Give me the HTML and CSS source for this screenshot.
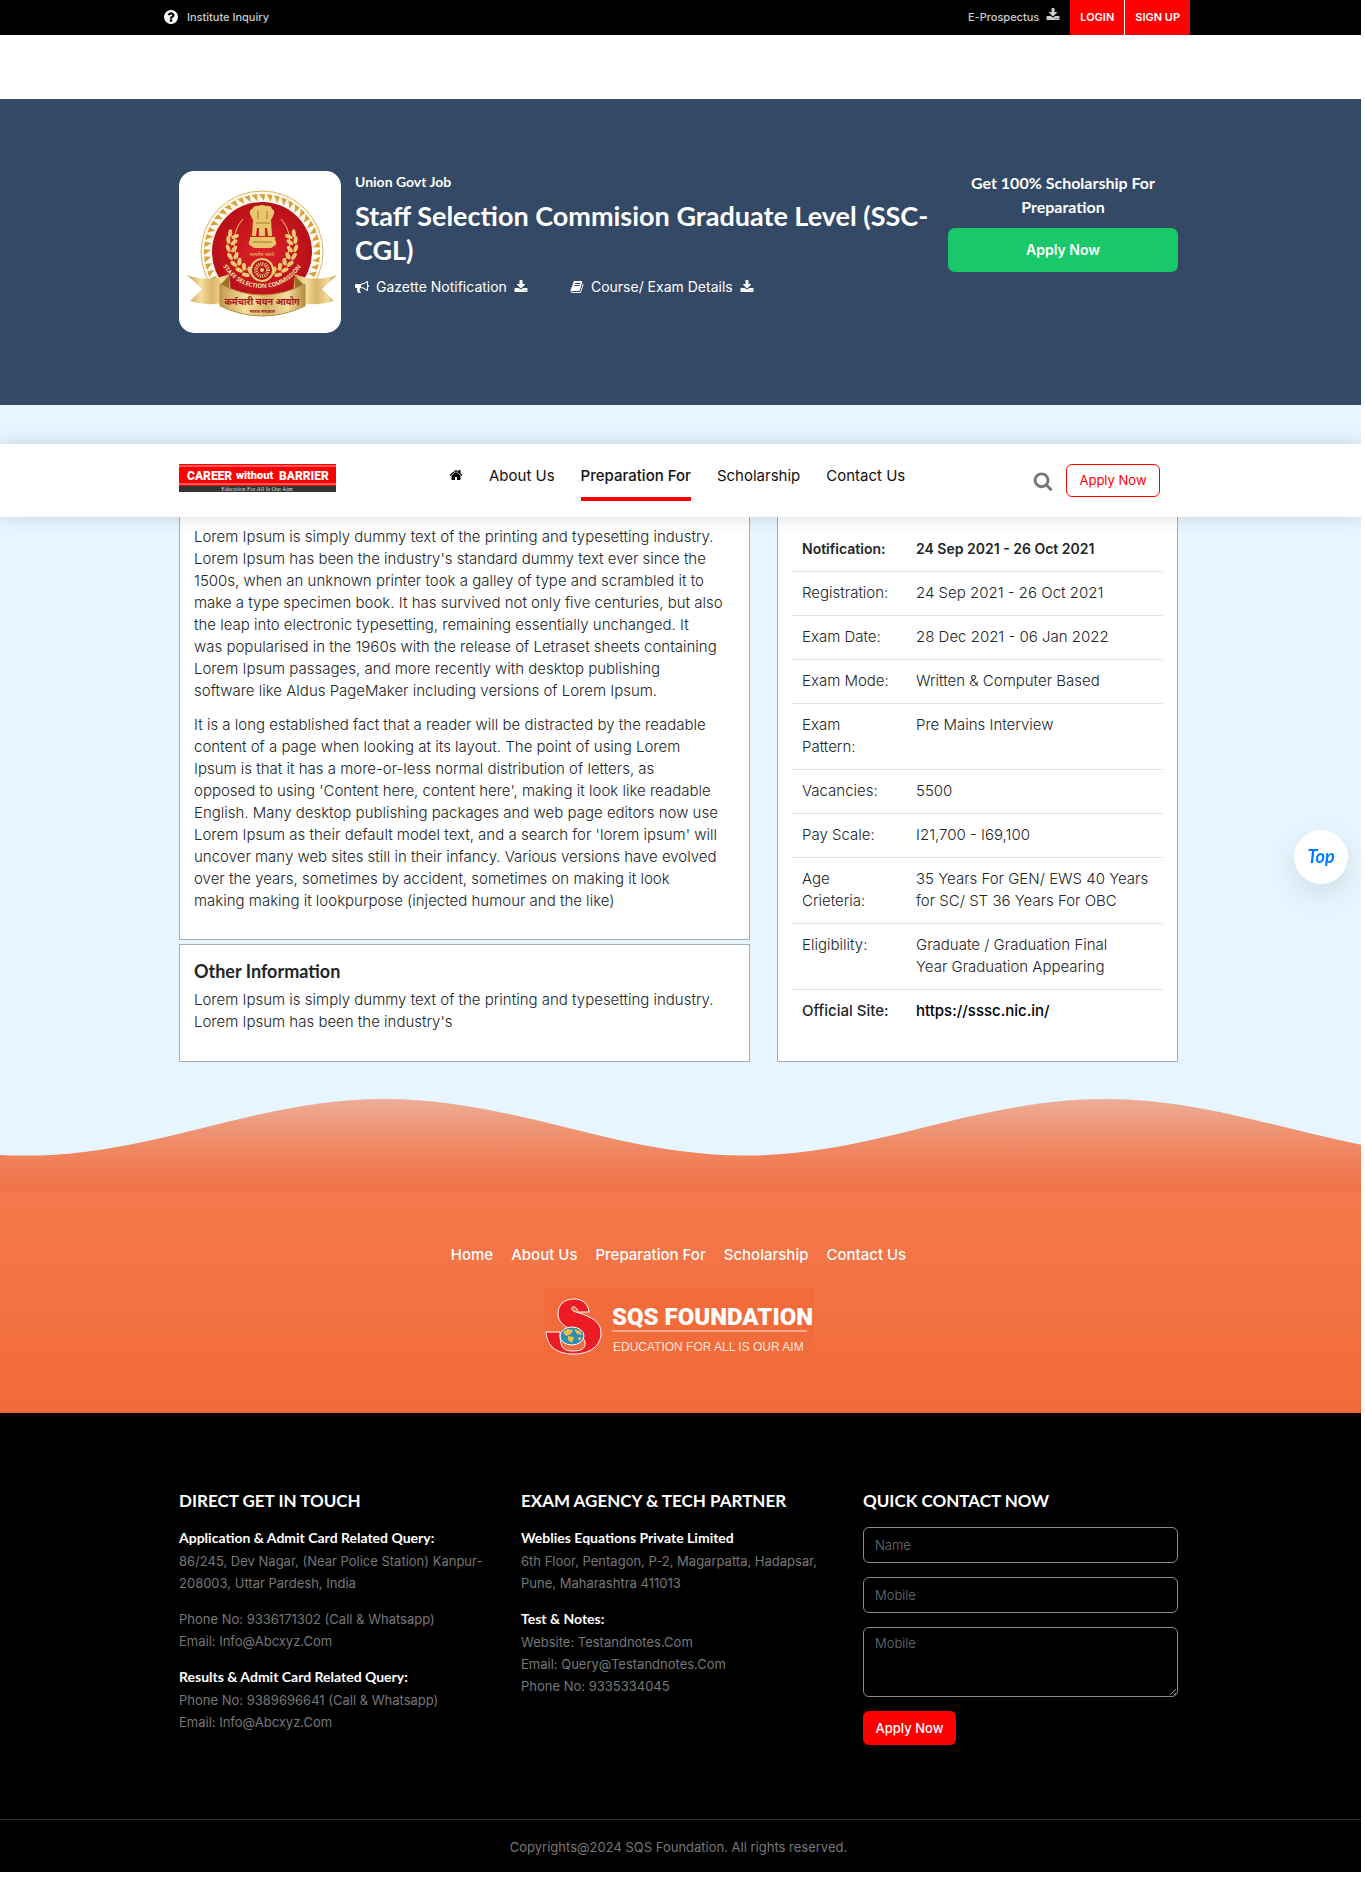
FILE: index.html
```html
<!DOCTYPE html>
<html lang="en">
<head>
<meta charset="utf-8">
<meta name="viewport" content="width=device-width, initial-scale=1">
<title>Staff Selection Commision Graduate Level (SSC-CGL)</title>
<link rel="stylesheet" href="styles.css">
</head>
<body>
<svg class="sprite" aria-hidden="true">
  <symbol id="i-download" viewBox="0 0 1792 1792"><path d="M1344 1344q0-26-19-45t-45-19-45 19-19 45 19 45 45 19 45-19 19-45zm256 0q0-26-19-45t-45-19-45 19-19 45 19 45 45 19 45-19 19-45zm128-224v320q0 40-28 68t-68 28h-1472q-40 0-68-28t-28-68v-320q0-40 28-68t68-28h465l135 136q58 56 136 56t136-56l136-136h464q40 0 68 28t28 68zm-325-569q17 41-14 70l-448 448q-18 19-45 19t-45-19l-448-448q-31-29-14-70 17-39 59-39h256v-448q0-26 19-45t45-19h256q26 0 45 19t19 45v448h256q42 0 59 39z"/></symbol>
  <symbol id="i-home" viewBox="0 0 1792 1792"><path d="M1472 992v480q0 26-19 45t-45 19h-384v-384h-256v384h-384q-26 0-45-19t-19-45v-480q0-1 .5-3t.5-3l575-474 575 474q1 2 1 6zm223-69l-62 74q-8 9-21 11h-3q-13 0-21-7l-692-577-692 577q-12 8-24 7-13-2-21-11l-62-74q-8-10-7-23.5t11-21.5l719-599q32-26 76-26t76 26l244 204v-195q0-14 9-23t23-9h192q14 0 23 9t9 23v408l219 182q10 8 11 21.5t-7 23.5z"/></symbol>
  <symbol id="i-search" viewBox="0 0 1792 1792"><path d="M1216 832q0-185-131.5-316.5t-316.5-131.5-316.5 131.5-131.5 316.5 131.5 316.5 316.5 131.5 316.5-131.5 131.5-316.5zm512 832q0 52-38 90t-90 38q-54 0-90-38l-343-342q-179 124-399 124-143 0-273.5-55.5t-225-150-150-225-55.5-273.5 55.5-273.5 150-225 225-150 273.5-55.5 273.5 55.5 225 150 150 225 55.5 273.5q0 220-124 399l343 343q37 37 37 90z"/></symbol>
  <symbol id="i-question" viewBox="128 128 1536 1536"><path d="M1024 1376v-192q0-14-9-23t-23-9h-192q-14 0-23 9t-9 23v192q0 14 9 23t23 9h192q14 0 23-9t9-23zm256-672q0-88-55.5-163t-138.5-116-170-41q-243 0-371 213-15 24 8 42l132 100q7 6 19 6 16 0 25-12 53-68 86-92 34-24 86-24 48 0 85.5 26t37.5 59q0 38-20 61t-68 45q-63 28-115.5 86.5t-52.5 125.5v36q0 14 9 23t23 9h192q14 0 23-9t9-23q0-19 21.5-49.5t54.5-49.5q32-18 49-28.5t46-35 44.5-48 28-60.5 12.5-81zm384 192q0 209-103 385.5t-279.5 279.5-385.5 103-385.5-103-279.5-279.5-103-385.5 103-385.5 279.5-279.5 385.5-103 385.5 103 279.5 279.5 103 385.5z"/></symbol>
  <symbol id="i-bullhorn" viewBox="0 0 1792 1792"><path d="M1664 640q53 0 90.5 37.5t37.5 90.5-37.5 90.5-90.5 37.5v384q0 52-38 90t-90 38q-417-347-812-380-58 19-91 66t-31 100.5 40 92.5q-20 33-23 65.5t6 58 33.5 55 48 50 61.5 50.5q-29 58-111.5 83t-168.5 11.5-132-55.5q-7-23-29.5-87.5t-32-94.5-23-89-15-101 3.5-98.5 22-110.5h-122q-66 0-113-47t-47-113v-192q0-66 47-113t113-47h480q435 0 896-384 52 0 90 38t38 90v384zm-128 604v-954q-394 302-768 343v270q377 42 768 341z"/></symbol>
  <symbol id="i-book" viewBox="0 0 1792 1792"><path d="M1703 478q40 57 18 129l-275 906q-19 64-76.5 107.5t-122.5 43.5h-923q-77 0-148.5-53.5t-99.5-131.5q-24-67-2-127 0-4 3-27t4-37q1-8-3-21.5t-3-19.5q2-11 8-21t16.5-23.5 16.5-23.5q23-38 45-91.5t30-91.5q3-10 .5-30t-.5-28q3-11 17-28t17-23q21-36 42-92t25-90q1-9-2.5-32t.5-28q4-13 22-30.5t22-22.5q19-26 42.5-84.5t27.5-96.5q1-8-3-25.5t-2-26.5q2-8 9-18t18-23 17-21q8-12 16.5-30.5t15-35 16-36 19.5-32 26.5-23.5 36-11.5 47.5 5.5l-1 3q38-9 51-9h761q74 0 114 56t18 130l-274 906q-36 119-71.5 153.5t-128.5 34.5h-869q-27 0-38 15-11 16-1 43 24 70 144 70h923q29 0 56-15.5t35-41.5l300-987q7-22 5-57 38 15 59 43zm-1064 2q-4 13 2 22.5t20 9.5h608q13 0 25.5-9.5t16.5-22.5l21-64q4-13-2-22.5t-20-9.5h-608q-13 0-25.5 9.5t-16.5 22.5zm-83 256q-4 13 2 22.5t20 9.5h608q13 0 25.5-9.5t16.5-22.5l21-64q4-13-2-22.5t-20-9.5h-608q-13 0-25.5 9.5t-16.5 22.5z"/></symbol>
</svg>

<div class="topbar band">
  <div class="topbar-inner">
    <a class="inquiry" href="#"><svg class="icon icon-white"><use href="#i-question"/></svg>Institute Inquiry</a>
    <div class="topbar-links">
      <a class="prospectus" href="#">E-Prospectus <svg class="icon"><use href="#i-download"/></svg></a>
      <a class="account" href="#">LOGIN</a>
      <a class="account" href="#">SIGN UP</a>
    </div>
  </div>
</div>

<section class="hero band">
  <div class="container hero-inner">
    <div class="emblem">
      <svg viewBox="0 0 162 162" role="img" aria-label="Staff Selection Commission emblem">
        <defs>
          <linearGradient id="ribbon" x1="0" x2="1"><stop offset="0" stop-color="#c39a4c"/><stop offset=".3" stop-color="#f5dfa0"/><stop offset=".55" stop-color="#d9b468"/><stop offset=".8" stop-color="#f3dc9c"/><stop offset="1" stop-color="#b98c3e"/></linearGradient>
          <radialGradient id="red"><stop offset="0" stop-color="#dd2226"/><stop offset="1" stop-color="#b80f18"/></radialGradient>
          <path id="t1" d="M80 23h6l-1 7z" fill="#d6a23a"/>
          <g id="t2"><use href="#t1"/><use href="#t1" transform="rotate(7.5 83 81)"/></g>
          <g id="t4"><use href="#t2"/><use href="#t2" transform="rotate(15 83 81)"/></g>
          <g id="t8"><use href="#t4"/><use href="#t4" transform="rotate(30 83 81)"/></g>
          <g id="t16"><use href="#t8"/><use href="#t8" transform="rotate(60 83 81)"/></g>
          <g id="l1" fill="#ecca74"><ellipse cx="50" cy="82" rx="2" ry="4" transform="rotate(-28 50 82)"/><ellipse cx="56" cy="82" rx="2" ry="4" transform="rotate(32 56 82)"/></g>
          <g id="laurel"><path d="M64 48A30 33 0 0 0 74 102" fill="none" stroke="#ecca74"/><use href="#l1" transform="rotate(-48 83 74)"/><use href="#l1" transform="rotate(-34 83 74)"/><use href="#l1" transform="rotate(-20 83 74)"/><use href="#l1" transform="rotate(-6 83 74)"/><use href="#l1" transform="rotate(8 83 74)"/><use href="#l1" transform="rotate(22 83 74)"/><use href="#l1" transform="rotate(34 83 74)"/></g>
          <path id="arc" d="M38 74a45 43 0 0 0 90 0"/>
        </defs>
        <circle cx="83" cy="81" r="61" fill="#fffaf0" stroke="#dcb45c"/>
        <use href="#t16" transform="rotate(-120 83 81)"/><use href="#t16"/>
        <circle cx="83" cy="81" r="50" fill="url(#red)"/>
        <use href="#laurel"/><use href="#laurel" transform="translate(166 0) scale(-1 1)"/>
        <g fill="#e9c66c">
          <path d="M73 38q2-4 6-3q4-2 8 0q5-1 6 3q3 1 2 5l-3 6 1 16h-4l-1-8h-2v8h-6v-8h-2l-1 8h-4l1-16-3-6q-1-4 2-5z"/>
          <path d="M71 66h25v3q3 4-1 6l-3 2H75l-3-2q-4-2-1-6z"/>
        </g>
        <path d="M79 40v8m9-8v8m-11 4h14M74 71h19" stroke="#a77a25" fill="none"/>
        <text class="motto" x="83" y="85" text-anchor="middle">सत्यमेव जयते</text>
        <circle cx="83" cy="99" r="11" fill="#b80f18" stroke="#ecca74" stroke-width="2"/>
        <circle cx="83" cy="99" r="6" fill="none" stroke="#ecca74" stroke-width="4" stroke-dasharray="1 1"/>
        <circle cx="83" cy="99" r="2" fill="#ecca74"/>
        <path d="M8 104q22 8 42-1l3 26q-22 8-42 1l12-12z" fill="url(#ribbon)"/>
        <path d="M158 104q-22 8-42-1l-3 26q22 8 42 1l-12-12z" fill="url(#ribbon)"/>
        <path d="M41 114l9-9v19z M125 114l-9-9v19z" fill="#9a6f2b"/>
        <path d="M41 113q42 22 85 0v22q-42 20-85 0z" fill="url(#ribbon)" stroke="#b98c3e"/>
        <text class="ring"><textPath href="#arc" startOffset="50%" text-anchor="middle">STAFF SELECTION COMMISSION</textPath></text>
        <text class="hindi" x="83" y="134" text-anchor="middle">कर्मचारी चयन आयोग</text>
        <text class="hindi-small" x="83" y="142" text-anchor="middle">भारत सरकार</text>
      </svg>
    </div>
    <div class="hero-copy">
      <p class="kicker">Union Govt Job</p>
      <h1>Staff Selection Commision Graduate Level (SSC-CGL)</h1>
      <div class="hero-links">
        <a href="#"><svg class="icon"><use href="#i-bullhorn"/></svg>Gazette Notification<svg class="icon"><use href="#i-download"/></svg></a>
        <a href="#"><svg class="icon"><use href="#i-book"/></svg>Course/ Exam Details<svg class="icon"><use href="#i-download"/></svg></a>
      </div>
    </div>
    <div class="hero-cta">
      <p>Get 100% Scholarship For Preparation</p>
      <button class="btn-green" type="button">Apply Now</button>
    </div>
  </div>
</section>

<main class="content">
  <header class="navbar band">
    <div class="container nav-inner">
      <a class="brand" href="#">
        <svg viewBox="0 0 157 28" role="img" aria-label="Career without Barrier">
          <rect width="157" height="28" fill="#fe0000"/>
          <path d="M0 2h157M0 20h157" stroke="#ffb0b0"/>
          <rect y="22" width="157" height="6" fill="#333"/>
          <g class="brand-text"><text x="8" y="16">CAREER</text><text class="brand-mid" x="57" y="15">without</text><text x="100" y="16">BARRIER</text></g>
          <text class="brand-sub" x="78" y="27" text-anchor="middle">Education For All Is Our Aim</text>
        </svg>
      </a>
      <nav class="main-nav" aria-label="Main">
        <a href="#" aria-label="Home"><svg class="icon"><use href="#i-home"/></svg></a>
        <a href="#">About Us</a>
        <a class="active" href="#">Preparation For</a>
        <a href="#">Scholarship</a>
        <a href="#">Contact Us</a>
      </nav>
      <div class="nav-actions">
        <button class="search" type="button" aria-label="Search"><svg><use href="#i-search"/></svg></button>
        <button class="btn-outline" type="button">Apply Now</button>
      </div>
    </div>
  </header>

  <div class="band">
    <div class="container columns">
      <div class="articles">
        <article class="card card-first">
          <p>Lorem Ipsum is simply dummy text of the printing and typesetting industry.<br>
            Lorem Ipsum has been the industry's standard dummy text ever since the<br>
            1500s, when an unknown printer took a galley of type and scrambled it to<br>
            make a type specimen book. It has survived not only five centuries, but also<br>
            the leap into electronic typesetting, remaining essentially unchanged. It<br>
            was popularised in the 1960s with the release of Letraset sheets containing<br>
            Lorem Ipsum passages, and more recently with desktop publishing<br>
            software like Aldus PageMaker including versions of Lorem Ipsum.</p>
          <p>It is a long established fact that a reader will be distracted by the readable<br>
            content of a page when looking at its layout. The point of using Lorem<br>
            Ipsum is that it has a more-or-less normal distribution of letters, as<br>
            opposed to using 'Content here, content here', making it look like readable<br>
            English. Many desktop publishing packages and web page editors now use<br>
            Lorem Ipsum as their default model text, and a search for 'lorem ipsum' will<br>
            uncover many web sites still in their infancy. Various versions have evolved<br>
            over the years, sometimes by accident, sometimes on making it look<br>
            making making it lookpurpose (injected humour and the like)</p>
        </article>
        <article class="card">
          <h2>Other Information</h2>
          <p>Lorem Ipsum is simply dummy text of the printing and typesetting industry.<br>
            Lorem Ipsum has been the industry's</p>
        </article>
      </div>
      <aside class="card facts">
        <table>
          <tbody>
            <tr class="strong"><th scope="row">Notification:</th><td>24 Sep 2021 - 26 Oct 2021</td></tr>
            <tr><th scope="row">Registration:</th><td>24 Sep 2021 - 26 Oct 2021</td></tr>
            <tr><th scope="row">Exam Date:</th><td>28 Dec 2021 - 06 Jan 2022</td></tr>
            <tr><th scope="row">Exam Mode:</th><td>Written &amp; Computer Based</td></tr>
            <tr><th scope="row">Exam<br>Pattern:</th><td>Pre Mains Interview</td></tr>
            <tr><th scope="row">Vacancies:</th><td>5500</td></tr>
            <tr><th scope="row">Pay Scale:</th><td>I21,700 - I69,100</td></tr>
            <tr><th scope="row">Age<br>Crieteria:</th><td>35 Years For GEN/ EWS 40 Years for SC/ ST 36 Years For OBC</td></tr>
            <tr><th scope="row">Eligibility:</th><td>Graduate / Graduation Final<br>Year Graduation Appearing</td></tr>
            <tr class="medium"><th scope="row">Official Site:</th><td><a href="#">https://sssc.nic.in/</a></td></tr>
          </tbody>
        </table>
      </aside>
    </div>
  </div>

  <svg class="wave" viewBox="0 0 1365 92" preserveAspectRatio="none" aria-hidden="true">
    <defs><linearGradient id="wave-fill" x1="0" x2="0" y1="0" y2="1"><stop offset="0" stop-color="#edae98"/><stop offset=".3" stop-color="#ee9676"/><stop offset=".65" stop-color="#f1805a"/><stop offset="1" stop-color="#f07347"/></linearGradient></defs>
    <path fill="url(#wave-fill)" d="M-335 0C-205 0-105 56 25 56S255 0 385 0S615 56 745 56S975 0 1105 0S1335 56 1465 56V93H-335z"/>
  </svg>
</main>

<section class="orange band">
  <nav class="foot-nav" aria-label="Footer">
    <a href="#">Home</a><a href="#">About Us</a><a href="#">Preparation For</a><a href="#">Scholarship</a><a href="#">Contact Us</a>
  </nav>
  <svg class="foot-logo" viewBox="0 0 270 71" role="img" aria-label="SQS Foundation">
    <rect width="270" height="71" fill="#f26b3a"/>
    <path d="M45 24C44 15 38 11 30 11C20 11 14 17 14 26C14 35 21 38 29 43C38 48 42 52 41 57C40 62 35 63 28 63C17 63 16 56 16 44H2C3 58 12 66 30 66C47 66 57 57 57 45C57 35 50 31 41 27C34 24 27 24 28 20C29 17 33 19 34 24z" fill="#ed1c24" stroke="#fff"/>
    <ellipse cx="28" cy="48" rx="12" ry="9" fill="#2a8fb5" stroke="#fff"/>
    <path d="M19 44l5-3 5 1-2 4-5 2zM30 41l6 2 2 4-5-1zM24 48l6 1-2 6-4-3zM34 49l4 1-3 3z" fill="#efc04a"/>
    <text class="foot-name" x="68" y="37">SQS FOUNDATION</text>
    <path d="M68 43h195" stroke="#ffe5da"/>
    <text class="foot-tag" x="69" y="63">EDUCATION FOR ALL IS OUR AIM</text>
  </svg>
</section>

<footer class="footer">
  <div class="band">
    <div class="container foot-cols">
      <section>
        <h3>DIRECT GET IN TOUCH</h3>
        <h4>Application &amp; Admit Card Related Query:</h4>
        <p>86/245, Dev Nagar, (Near Police Station) Kanpur-208003, Uttar Pardesh, India</p>
        <p>Phone No: 9336171302 (Call &amp; Whatsapp)<br>Email: Info@Abcxyz.Com</p>
        <h4>Results &amp; Admit Card Related Query:</h4>
        <p>Phone No: 9389696641 (Call &amp; Whatsapp)<br>Email: Info@Abcxyz.Com</p>
      </section>
      <section>
        <h3>EXAM AGENCY &amp; TECH PARTNER</h3>
        <h4>Weblies Equations Private Limited</h4>
        <p>6th Floor, Pentagon, P-2, Magarpatta, Hadapsar, Pune, Maharashtra 411013</p>
        <h4>Test &amp; Notes:</h4>
        <p>Website: Testandnotes.Com<br>Email: Query@Testandnotes.Com<br>Phone No: 9335334045</p>
      </section>
      <section>
        <h3>QUICK CONTACT NOW</h3>
        <form class="contact">
          <input type="text" placeholder="Name" aria-label="Name">
          <input type="tel" placeholder="Mobile" aria-label="Mobile">
          <textarea placeholder="Mobile" aria-label="Message"></textarea>
          <button class="btn-red" type="button">Apply Now</button>
        </form>
      </section>
    </div>
  </div>
  <p class="copyright band">Copyrights@2024 SQS Foundation. All rights reserved.</p>
</footer>

<a class="to-top" href="#">Top</a>
</body>
</html>
```
FILE: styles.css
```css
* { box-sizing: border-box; }

:root {
  --body: Inter, "Open Sans", sans-serif;
  --head: Lato, "Open Sans", sans-serif;
}

body {
  margin: 0 4px 0 0;
  background: #fff;
  color: #212529;
  font: 300 15px/22px var(--body);
}

h1, h2, h3, h4, p { margin: 0; }
a { color: inherit; text-decoration: none; }
button { font-family: inherit; cursor: pointer; }

.sprite { display: none; }
.icon { width: 14px; height: 14px; fill: currentColor; flex: none; }
.icon-white { fill: #fff; }

/* Bands span the page; containers centre the content in them */
.band { padding-right: 4px; }
.container { max-width: 999px; margin: 0 auto; }

/* Top bar */
.topbar { background: #000; margin-bottom: 64px; color: #ccc; }
.topbar-inner {
  display: flex;
  justify-content: space-between;
  max-width: 1029px;
  height: 35px;
  margin: 0 auto;
  padding-right: 3px;
  font-size: 11px;
  font-weight: 500;
}
.topbar-inner a { display: flex; align-items: center; }
.inquiry { gap: 9px; padding-bottom: 2px; }
.topbar-links { display: flex; }
.prospectus { gap: 7px; padding: 0 10px 2px 0; }
.prospectus .icon { margin-bottom: 4px; }
.topbar-links .account {
  padding: 0 10px 2px;
  background: #f00;
  color: #fff;
  font-weight: 600;
}
.account + .account { border-left: 1px solid #fff; }

/* Hero */
.hero { background: #344966; color: #fff; padding-top: 72px; padding-bottom: 72px; }
.hero-inner { display: flex; }
.emblem {
  width: 162px;
  height: 162px;
  margin-right: 14px;
  flex: none;
  background: #fff;
  border-radius: 15px;
  overflow: hidden;
}
.emblem svg { display: block; }
.ring { font: 700 6px "Open Sans", sans-serif; fill: #f6e3b0; }
.motto { font: 5px "Noto Sans", sans-serif; fill: #ecca74; }
.hindi { font: 700 9px "Noto Sans", sans-serif; fill: #a3161b; }
.hindi-small { font: 700 5px "Noto Sans", sans-serif; fill: #a3161b; }
.hero-copy { flex: 1; }
.kicker { font: 700 14px/22px var(--head); }
.hero h1 { margin: 6px 0 9px; font: 700 27px/34px var(--head); }
.hero-links { display: flex; gap: 42px; font-size: 14px; font-weight: 400; }
.hero-links a { display: flex; align-items: center; gap: 7px; }
.hero-cta { width: 230px; flex: none; text-align: center; }
.hero-cta p { margin-bottom: 9px; padding: 0 12px; font: 700 16px/24px var(--head); }
.btn-green {
  width: 100%;
  height: 44px;
  padding: 0 0 2px;
  border: 0;
  border-radius: 7px;
  background: #19c969;
  color: #fff;
  font-size: 14px;
  font-weight: 600;
}

/* Navigation */
.content { background: #e6f5fe; padding-top: 39px; }
.navbar {
  position: relative;
  z-index: 2;
  background: #fff;
  box-shadow: 0 0 16px rgba(0, 0, 0, .15);
}
.nav-inner { display: flex; align-items: flex-start; height: 73px; padding-top: 20px; }
.brand { width: 157px; margin-right: 113px; }
.brand svg { display: block; width: 157px; height: 28px; }
.brand-text { font: 900 12px Roboto, sans-serif; fill: #fff; }
.brand-mid { font-size: 11px; }
.brand-sub { font: 6px "Liberation Serif", serif; fill: #ddd; }
.main-nav { display: flex; gap: 26px; font-weight: 400; color: #111; }
.main-nav a { height: 37px; padding-top: 1px; }
.main-nav .icon { display: block; margin-top: 3px; fill: #000; }
.main-nav .active { border-bottom: 4px solid #f00; font-weight: 500; }
.nav-actions { display: flex; align-items: center; gap: 13px; margin-left: auto; margin-right: 18px; }
.search { padding: 0; border: 0; background: none; color: #777; }
.search svg { display: block; width: 20px; height: 20px; fill: currentColor; }
.btn-outline {
  width: 94px;
  height: 33px;
  padding: 0 0 2px;
  border: 1px solid #f00;
  border-radius: 6px;
  background: #fff;
  color: #f00;
  font-size: 13px;
}

/* Cards */
.columns { display: grid; grid-template-columns: 571fr 401fr; gap: 27px; }
.card { background: #fff; border: 1px solid #a9aeb2; padding: 14px; }
.articles .card { padding-right: 7px; }
.card-first { margin-bottom: 4px; border-top: 0; padding-top: 9px; padding-bottom: 27px; }
.card-first p + p { margin-top: 12px; }
.card h2 { margin-bottom: 6px; font: 700 18px/24px var(--head); }
.card h2 + p { padding-bottom: 14px; }
.facts { border-top: 0; padding-top: 11px; }
.facts table { width: 100%; border-collapse: collapse; }
.facts th, .facts td { padding: 10px 10px 11px; text-align: left; vertical-align: top; font-weight: inherit; }
.facts th { width: 114px; }
.facts tr + tr { border-top: 1px solid #dee2e6; }
.facts .strong { font-size: 14px; font-weight: 600; }
.facts .medium { font-weight: 500; }
.facts .medium a { color: #000; }

.wave { display: block; width: calc(100% + 4px); height: 93px; margin-top: 37px; }

/* Orange band */
.orange {
  display: flex;
  flex-direction: column;
  align-items: center;
  padding-top: 52px;
  padding-bottom: 54px;
  background: linear-gradient(#f4794c, #f26a39);
  color: #fff;
}
.foot-nav { display: flex; gap: 18px; margin-bottom: 22px; font-weight: 500; }
.foot-logo { width: 270px; height: 71px; }
.foot-name { font: 900 24px Roboto, sans-serif; fill: #fff; }
.foot-tag { font: 12px "Liberation Sans", sans-serif; fill: #ffe5da; }

/* Footer */
.footer { background: #000; color: #777; font-size: 13px; font-weight: 400; }
.foot-cols { display: grid; grid-template-columns: repeat(3, 1fr); gap: 27px; padding: 76px 0 72px; }
.footer h3 { margin-bottom: 14px; color: #fff; font: 700 17px/24px var(--head); }
.footer h4 { margin-bottom: 1px; color: #fff; font: 700 14px/22px var(--head); }
.footer p { margin-bottom: 14px; }
.contact { display: grid; gap: 14px; justify-items: start; }
.contact input, .contact textarea {
  width: 100%;
  height: 36px;
  padding: 6px 11px;
  border: 1px solid #8a8a8a;
  border-radius: 6px;
  background: #000;
  color: #fff;
  font: 300 13px/18px var(--body);
}
.contact textarea { display: block; height: 70px; }
.contact ::placeholder { color: #6c757d; }
.btn-red {
  width: 93px;
  height: 34px;
  padding: 0;
  border: 0;
  border-radius: 6px;
  background: #f00;
  color: #fff;
  font-size: 13px;
  font-weight: 500;
}
.footer .copyright { margin: 0; border-top: 1px solid #333; padding-top: 16px; padding-bottom: 14px; text-align: center; }

.to-top {
  position: fixed;
  z-index: 3;
  top: 830px;
  right: 17px;
  width: 54px;
  height: 54px;
  border-radius: 50%;
  background: #fff;
  box-shadow: 0 10px 30px rgba(0, 0, 0, .1);
  color: #007bff;
  font: italic 700 18px/52px Lato, sans-serif;
  text-align: center;
}
```
